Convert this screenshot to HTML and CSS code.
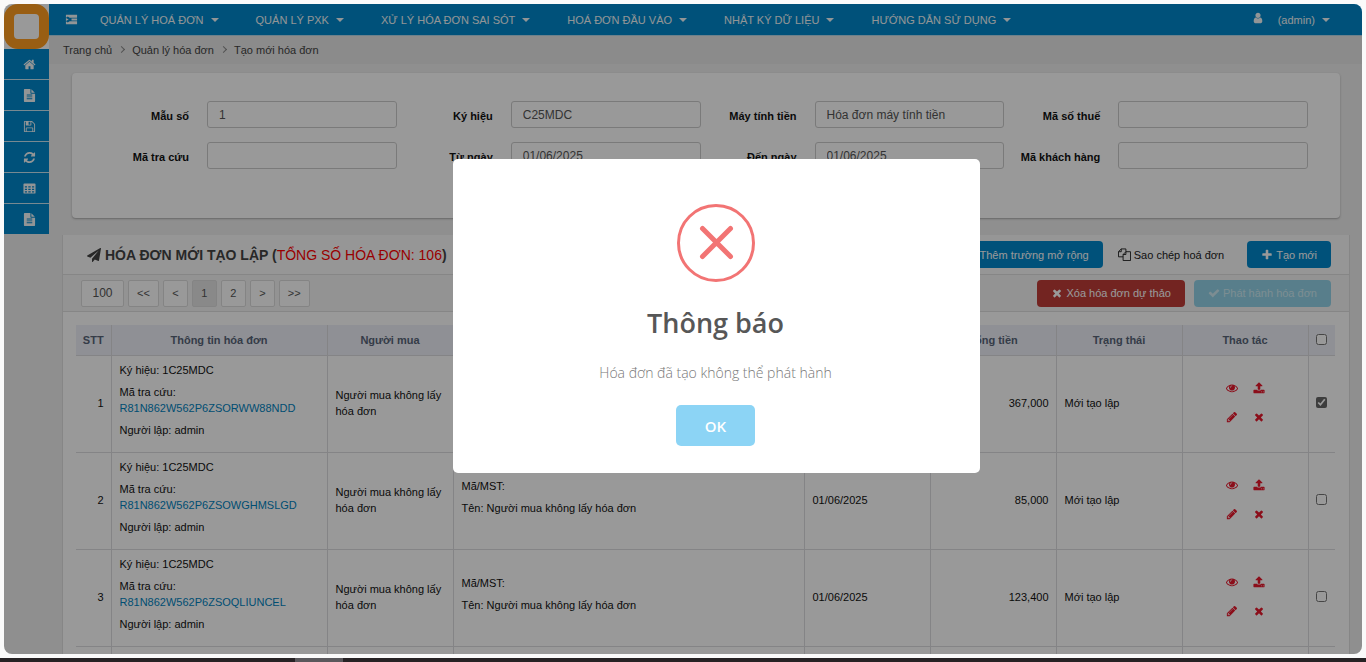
FILE: index.html
```
<!DOCTYPE html>
<html lang="vi">
<head>
    <meta charset="UTF-8">
    <meta name="viewport" content="width=device-width, initial-scale=1.0">
    <title>Tạo mới hóa đơn</title>
    <link rel="stylesheet" href="styles.css">
</head>
<body>
    <svg class="sprite" aria-hidden="true">
        <symbol id="home" viewBox="0 0 1792 1792"><path d="M1472 992v480q0 26-19 45t-45 19h-384v-384h-256v384h-384q-26 0-45-19t-19-45v-480q0-1 .5-3t.5-3l575-474 575 474q1 2 1 6zm223-69l-62 74q-8 9-21 11h-3q-13 0-21-7l-692-577-692 577q-12 8-24 7-13-2-21-11l-62-74q-8-10-7-23.5t11-21.5l719-599q32-26 76-26t76 26l244 204v-195q0-14 9-23t23-9h192q14 0 23 9t9 23v408l219 182q10 8 11 21.5t-7 23.5z"/></symbol>
        <symbol id="file" viewBox="0 0 1792 1792"><path d="M1596 476q14 14 28 36h-472v-472q22 14 36 28zm-476 164h544v1056q0 40-28 68t-68 28h-1344q-40 0-68-28t-28-68v-1600q0-40 28-68t68-28h800v544q0 40 28 68t68 28zm160 736v-64q0-14-9-23t-23-9h-704q-14 0-23 9t-9 23v64q0 14 9 23t23 9h704q14 0 23-9t9-23zm0-256v-64q0-14-9-23t-23-9h-704q-14 0-23 9t-9 23v64q0 14 9 23t23 9h704q14 0 23-9t9-23zm0-256v-64q0-14-9-23t-23-9h-704q-14 0-23 9t-9 23v64q0 14 9 23t23 9h704q14 0 23-9t9-23z"/></symbol>
        <symbol id="save" viewBox="0 0 1792 1792"><path d="M512 1536h768v-384h-768v384zm896 0h128v-896q0-14-10-38.5t-20-34.5l-281-281q-10-10-34-20t-39-10v416q0 40-28 68t-68 28h-576q-40 0-68-28t-28-68v-416h-128v1280h128v-416q0-40 28-68t68-28h832q40 0 68 28t28 68v416zm-384-928v-320q0-13-9.5-22.5t-22.5-9.5h-192q-13 0-22.5 9.5t-9.5 22.5v320q0 13 9.5 22.5t22.5 9.5h192q13 0 22.5-9.5t9.5-22.5zm640 32v928q0 40-28 68t-68 28h-1344q-40 0-68-28t-28-68v-1344q0-40 28-68t68-28h928q40 0 88 20t76 48l280 280q28 28 48 76t20 88z"/></symbol>
        <symbol id="refresh" viewBox="0 0 1792 1792"><path d="M1639 1056q0 5-1 7-64 268-268 434.5t-478 166.5q-146 0-282.5-55t-243.5-157l-129 129q-19 19-45 19t-45-19-19-45v-448q0-26 19-45t45-19h448q26 0 45 19t19 45-19 45l-137 137q71 66 161 102t187 36q134 0 250-65t186-179q11-17 53-117 8-23 30-23h192q13 0 22.5 9.5t9.5 22.5zm25-800v448q0 26-19 45t-45 19h-448q-26 0-45-19t-19-45 19-45l138-138q-148-137-349-137-134 0-250 65t-186 179q-11 17-53 117-8 23-30 23h-199q-13 0-22.5-9.5t-9.5-22.5v-7q65-268 270-434.5t480-166.5q146 0 284 55.5t245 156.5l130-129q19-19 45-19t45 19 19 45z"/></symbol>
        <symbol id="table" viewBox="0 0 14 14"><path fill-rule="evenodd" d="M1.500 1.500h11a1 1 0 0 1 1 1v9a1 1 0 0 1-1 1h-11a1 1 0 0 1-1-1v-9a1 1 0 0 1 1-1zM2 4.500v1.500h2.300v-1.500zm3.700 0v1.500h2.600v-1.500zm4 0v1.500h2.300v-1.500zM2 7.200v1.500h2.300v-1.500zm3.700 0v1.500h2.600v-1.500zm4 0v1.500h2.300v-1.500zM2 9.900v1.400h2.300v-1.400zm3.700 0v1.400h2.600v-1.400zm4 0v1.400h2.300v-1.400z"/></symbol>
        <symbol id="indent" viewBox="0 0 14 12"><path d="M1 1h12v3H5L3 2.700 1 4zM7 5h6v2H7zM1 8l2 1.300L5 8h8v3H1zM1 4.500l3 1.500-3 1.500z"/></symbol>
        <symbol id="user" viewBox="0 0 1792 1792"><path d="M1536 1399q0 109-62.5 187t-150.5 78h-854q-88 0-150.5-78t-62.500-187q0-85 8.500-160.500t31.500-152 58.500-131 94-89 134.500-34.500q131 128 313 128t313-128q76 0 134.500 34.500t94 89 58.500 131 31.500 152 8.500 160.500zm-256-887q0 159-112.500 271.500t-271.500 112.500-271.500-112.500-112.500-271.500 112.500-271.500 271.500-112.500 271.500 112.500 112.500 271.500z"/></symbol>
        <symbol id="plane" viewBox="0 0 1792 1792"><path d="M1764 11q33 24 27 64l-256 1536q-5 29-32 45-14 8-31 8-11 0-24-5l-453-185-242 295q-18 23-49 23-13 0-22-4-19-7-30.5-23.500t-11.500-36.500v-349l864-1059-1069 925-395-162q-37-14-40-55-2-40 32-59l1664-960q15-9 32-9 20 0 36 11z"/></symbol>
        <symbol id="times" viewBox="0 0 1792 1792"><path d="M1490 1322q0 40-28 68l-136 136q-28 28-68 28t-68-28l-294-294-294 294q-28 28-68 28t-68-28l-136-136q-28-28-28-68t28-68l294-294-294-294q-28-28-28-68t28-68l136-136q28-28 68-28t68 28l294 294 294-294q28-28 68-28t68 28l136 136q28 28 28 68t-28 68l-294 294 294 294q28 28 28 68z"/></symbol>
        <symbol id="check" viewBox="0 0 1792 1792"><path d="M1671 566q0 40-28 68l-724 724-136 136q-28 28-68 28t-68-28l-136-136-362-362q-28-28-28-68t28-68l136-136q28-28 68-28t68 28l294 295 656-657q28-28 68-28t68 28l136 136q28 28 28 68z"/></symbol>
        <symbol id="plus" viewBox="0 0 1792 1792"><path d="M1600 736v192q0 40-28 68t-68 28h-416v416q0 40-28 68t-68 28h-192q-40 0-68-28t-28-68v-416h-416q-40 0-68-28t-28-68v-192q0-40 28-68t68-28h416v-416q0-40 28-68t68-28h192q40 0 68 28t28 68v416h416q40 0 68 28t28 68z"/></symbol>
        <symbol id="eye" viewBox="0 0 1792 1792"><path d="M1664 960q-152-236-381-353 61 104 61 225 0 185-131.500 316.500t-316.500 131.500-316.500-131.500-131.500-316.500q0-121 61-225-229 117-381 353 133 205 333.500 326.500t434.500 121.500 434.500-121.500 333.500-326.500zm-720-384q0-20-14-34t-34-14q-125 0-214.500 89.500t-89.500 214.500q0 20 14 34t34 14 34-14 14-34q0-86 61-147t147-61q20 0 34-14t14-34zm848 384q0 34-20 69-140 230-376.500 368.500t-499.500 138.500-499.500-139-376.500-368q-20-35-20-69t20-69q140-229 376.500-368t499.500-139 499.500 139 376.500 368q20 35 20 69z"/></symbol>
        <symbol id="upload" viewBox="0 0 1792 1792"><path d="M1344 1472q0-26-19-45t-45-19-45 19-19 45 19 45 45 19 45-19 19-45zm256 0q0-26-19-45t-45-19-45 19-19 45 19 45 45 19 45-19 19-45zm128-224v320q0 40-28 68t-68 28h-1472q-40 0-68-28t-28-68v-320q0-40 28-68t68-28h427q21 56 70.500 92t110.500 36h256q61 0 110.500-36t70.500-92h427q40 0 68 28t28 68zm-325-648q-17 40-59 40h-256v448q0 26-19 45t-45 19h-256q-26 0-45-19t-19-45v-448h-256q-42 0-59-40-17-39 14-69l448-448q18-19 45-19t45 19l448 448q31 30 14 69z"/></symbol>
        <symbol id="pencil" viewBox="0 0 1792 1792"><path d="M491 1536l91-91-235-235-91 91v107h128v128h107zm523-928q0-22-22-22-10 0-17 7l-542 542q-7 7-7 17 0 22 22 22 10 0 17-7l542-542q7-7 7-17zm-54-192l416 416-832 832h-416v-416zm683 96q0 53-37 90l-166 166-416-416 166-165q36-38 90-38 53 0 91 38l235 234q37 39 37 91z"/></symbol>
        <symbol id="copy" viewBox="0 0 14 14"><path fill="none" stroke="currentColor" d="M5.500 9.500h-5v-5.500l3-3h5v3M3.500 1v3h-3M13.500 4v9.500h-8v-6.500l3-3zM8.500 4v3h-3"/></symbol>
    </svg>

    <div class="screen">
        <aside class="sidebar">
            <a class="logo" href="#" aria-label="Logo"><span></span></a>
            <a href="#" aria-label="Trang chủ"><svg><use href="#home"/></svg></a>
            <a href="#" aria-label="Hóa đơn"><svg><use href="#file"/></svg></a>
            <a href="#" aria-label="Lưu"><svg><use href="#save"/></svg></a>
            <a href="#" aria-label="Làm mới"><svg><use href="#refresh"/></svg></a>
            <a href="#" aria-label="Bảng"><svg><use href="#table"/></svg></a>
            <a href="#" aria-label="Báo cáo"><svg><use href="#file"/></svg></a>
        </aside>

        <div class="main">
            <nav class="navbar">
                <a href="#" class="toggle" aria-label="Menu"><svg><use href="#indent"/></svg></a>
                <a href="#" class="caret">QUẢN LÝ HOÁ ĐƠN</a>
                <a href="#" class="caret">QUẢN LÝ PXK</a>
                <a href="#" class="caret">XỬ LÝ HÓA ĐƠN SAI SÓT</a>
                <a href="#" class="caret">HOÁ ĐƠN ĐẦU VÀO</a>
                <a href="#" class="caret">NHẬT KÝ DỮ LIỆU</a>
                <a href="#" class="caret">HƯỚNG DẪN SỬ DỤNG</a>
                <a href="#" class="caret account"><svg><use href="#user"/></svg>(admin)</a>
            </nav>
            <div class="breadcrumb">
                <a href="#">Trang chủ</a>
                <a href="#">Quản lý hóa đơn</a>
                <a href="#">Tạo mới hóa đơn</a>
            </div>

            <form class="panel filter">
                <div class="field"><label for="mauSo">Mẫu số</label><input type="text" id="mauSo" value="1"></div>
                <div class="field"><label for="kyHieu">Ký hiệu</label><input type="text" id="kyHieu" value="C25MDC"></div>
                <div class="field"><label for="mayTinhTien">Máy tính tiền</label><input type="text" id="mayTinhTien" value="Hóa đơn máy tính tiền"></div>
                <div class="field"><label for="maSoThue">Mã số thuế</label><input type="text" id="maSoThue"></div>
                <div class="field"><label for="maTraCuu">Mã tra cứu</label><input type="text" id="maTraCuu"></div>
                <div class="field"><label for="tuNgay">Từ ngày</label><input type="text" id="tuNgay" value="01/06/2025"></div>
                <div class="field"><label for="denNgay">Đến ngày</label><input type="text" id="denNgay" value="01/06/2025"></div>
                <div class="field"><label for="maKhachHang">Mã khách hàng</label><input type="text" id="maKhachHang"></div>
            </form>

            <section class="panel list">
                <div class="list-head">
                    <h1><svg><use href="#plane"/></svg>HÓA ĐƠN MỚI TẠO LẬP (<span>TỔNG SỐ HÓA ĐƠN: 106</span>)</h1>
                    <button class="btn btn-primary">Thêm trường mở rộng</button>
                    <button class="btn btn-default"><svg><use href="#copy"/></svg>Sao chép hoá đơn</button>
                    <button class="btn btn-primary"><svg><use href="#plus"/></svg>Tạo mới</button>
                </div>
                <div class="toolbar">
                    <div class="pager">
                        <input type="text" value="100" aria-label="Số dòng">
                        <button>&lt;&lt;</button>
                        <button>&lt;</button>
                        <button class="active">1</button>
                        <button>2</button>
                        <button>&gt;</button>
                        <button>&gt;&gt;</button>
                    </div>
                    <button class="btn btn-danger"><svg><use href="#times"/></svg>Xóa hóa đơn dự thảo</button>
                    <button class="btn btn-info" disabled><svg><use href="#check"/></svg>Phát hành hóa đơn</button>
                </div>
                <table>
                    <colgroup>
                        <col class="c-no"><col class="c-info"><col class="c-mid"><col><col class="c-mid"><col class="c-mid"><col class="c-mid"><col class="c-mid"><col class="c-check">
                    </colgroup>
                    <thead>
                        <tr>
                            <th>STT</th>
                            <th>Thông tin hóa đơn</th>
                            <th>Người mua</th>
                            <th></th>
                            <th></th>
                            <th>Tổng tiền</th>
                            <th>Trạng thái</th>
                            <th>Thao tác</th>
                            <th><input type="checkbox" aria-label="Chọn tất cả"></th>
                        </tr>
                    </thead>
                    <tbody id="rows"></tbody>
                </table>
            </section>
        </div>

        <div class="overlay">
            <div class="alert" role="dialog" aria-labelledby="alertTitle">
                <svg class="error" viewBox="0 0 78 78"><circle cx="39" cy="39" r="37.500"/><path d="M25.500 24.500l28 28M53.500 24.500l-28 28"/></svg>
                <h2 id="alertTitle">Thông báo</h2>
                <p>Hóa đơn đã tạo không thể phát hành</p>
                <button>OK</button>
            </div>
        </div>
    </div>
    <div class="taskbar"><span></span></div>

    <script>
        const invoices = [
            { code: 'R81N862W562P6ZSORWW88NDD', total: '367,000', checked: true },
            { code: 'R81N862W562P6ZSOWGHMSLGD', total: '85,000' },
            { code: 'R81N862W562P6ZSOQLIUNCEL', total: '123,400' }
        ];
        const icon = (name, label) => `<button aria-label="${label}"><svg><use href="#${name}"/></svg></button>`;

        document.getElementById('rows').innerHTML = invoices.map((item, i) => `
            <tr>
                <td class="right">${i + 1}</td>
                <td><p>Ký hiệu: 1C25MDC</p><p>Mã tra cứu: <a href="#">${item.code}</a></p><p>Người lập: admin</p></td>
                <td>Người mua không lấy hóa đơn</td>
                <td><p>Mã/MST:</p><p>Tên: Người mua không lấy hóa đơn</p></td>
                <td>01/06/2025</td>
                <td class="right">${item.total}</td>
                <td>Mới tạo lập</td>
                <td><div class="actions">${icon('eye', 'Xem')}${icon('upload', 'Phát hành')}${icon('pencil', 'Sửa')}${icon('times', 'Xóa')}</div></td>
                <td class="center"><input type="checkbox" aria-label="Chọn" ${item.checked ? 'checked' : ''}></td>
            </tr>`).join('') + '<tr>' + '<td></td>'.repeat(9) + '</tr>';
    </script>
</body>
</html>
```
FILE: styles.css
```
* { box-sizing: border-box; }
body { font-family: "Liberation Sans", Arial, sans-serif; font-size: 11px; line-height: 16px; margin: 0; height: 100vh; display: flex; flex-direction: column; overflow: hidden; background: #fafafa; color: #111; }
a { color: inherit; text-decoration: none; }
p { margin: 0; }
svg { width: 13px; height: 13px; fill: currentColor; flex: none; }
button, input { font-family: inherit; margin: 0; }
button { cursor: pointer; }
.sprite { position: absolute; width: 0; height: 0; }

.screen { flex: 1; min-height: 0; margin: 4px; display: flex; position: relative; overflow: hidden; border-radius: 8px; background: #eee; }
.taskbar { height: 4px; background: #262224; flex: none; }
.taskbar span { display: block; width: 48px; height: 4px; margin-left: 295px; background: #5a585c; }

.sidebar { width: 45px; flex: none; }
.sidebar a { height: 31px; display: flex; align-items: center; justify-content: center; padding-left: 6px; background: #0088cc; color: #f4f8fa; border-bottom: 1px solid #c8e4f2; }
.sidebar a:last-child { height: 30px; border-bottom: 0; }
.sidebar .logo { height: 45px; padding: 0; background: #fff; border: 0; }
.logo span { width: 45px; height: 45px; border: 10px solid #ff9d20; border-radius: 14px; background: #ff9d20; display: flex; }
.logo span::before { content: ""; flex: 1; border-radius: 4px; background: #fff; }

.main { flex: 1; min-width: 0; }
.navbar { height: 32px; display: flex; align-items: center; background: #0088cc; color: #f4f8fa; border-bottom: 1px solid #b4d8ea; font-size: 11px; }
.navbar a { margin-right: 37px; display: flex; align-items: center; white-space: nowrap; }
.navbar .toggle { margin: 0 22px 0 16px; }
.caret::after { content: ""; margin-left: 7px; border: 4px solid transparent; border-top-color: currentColor; border-bottom: 0; }
.navbar .account { margin-left: auto; margin-right: 32px; }
.account svg { width: 12px; height: 12px; margin: 0 14px 3px 0; }
.breadcrumb { height: 28px; padding: 0 14px; display: flex; align-items: center; background: #e8e8e8; color: #444; }
.breadcrumb a + a::before { content: ""; display: inline-block; width: 4px; height: 4px; margin: 0 8px 2px 7px; border: solid #888; border-width: 1px 1px 0 0; transform: rotate(45deg); }

.panel { background: #fff; }
.filter { margin: 9px 22px 17px 23px; padding: 28px 32px 49px 21px; display: grid; grid-template-columns: repeat(4, 1fr); row-gap: 14px; border-radius: 4px; box-shadow: 0 1px 2px #aaa; }
.field { display: flex; align-items: center; gap: 18px; }
.field label { width: 96px; padding-top: 2px; text-align: right; font-weight: bold; white-space: nowrap; }
.field input { flex: 1; min-width: 0; height: 27px; padding: 0 11px; font-size: 12px; color: #555; background: #fff; border: 1px solid #ccc; border-radius: 3px; }

.list { margin: 0 12px 0 13px; border: 1px solid #e0e0e0; border-top: 0; }
.list-head, .toolbar { display: flex; align-items: center; padding: 0 18px; border-bottom: 1px solid #e0e0e0; }
.list-head { height: 40px; padding-left: 24px; background: #fafafa; }
.list-head h1 { flex: 1; margin: 0; display: flex; align-items: center; white-space: pre; font-size: 14px; color: #444; }
.list-head h1 svg { width: 14px; height: 14px; margin-right: 4px; }
.list-head h1 span { font-weight: normal; color: #f00; }
.toolbar { height: 37px; background: #f6f6f6; }
.btn { height: 27px; padding: 0 14px; display: flex; align-items: center; gap: 3px; font-size: 11px; border: 0; border-radius: 4px; }
.btn svg { width: 12px; height: 12px; }
.btn-primary { background: #0088cc; color: #fff; }
.btn-default { margin: 0 9px 0 1px; background: #fafafa; color: #222; }
.btn-default svg { width: 13px; height: 13px; }
.btn-danger { margin-right: 9px; background: #c03c38; color: #fff; }
.btn-info { background: #93d3e8; color: #d0ecf4; }
.pager { flex: 1; display: flex; gap: 4px; }
.pager input, .pager button { height: 27px; background: #fff; border: 1px solid #ddd; border-radius: 2px; color: #555; text-align: center; font-size: 12px; }
.pager input { width: 43px; }
.pager button { min-width: 25px; padding: 0 8px; font-size: 11px; }
.pager .active { background: #e4e4e4; }

table { width: calc(100% - 27px); margin: 13px 14px 0 13px; table-layout: fixed; border-collapse: collapse; }
.c-no { width: 35px; }
.c-info { width: 216px; }
.c-mid { width: 126px; }
.c-check { width: 27px; }
th { height: 30px; padding: 0; background: #eef1f8; color: #596579; }
th, td { border: 1px solid #dcdcdf; border-width: 0 1px 1px 0; }
th:last-child, td:last-child { border-right: 0; }
td { height: 97px; padding: 0 7px 2px 8px; }
td p + p { margin-top: 6px; }
td p:last-child { margin-bottom: 6px; }
td a { display: block; color: #0083bf; }
.right { text-align: right; }
.center, th { text-align: center; }
td.center { padding: 0 0 2px; }
table input { display: block; width: 11px; height: 11px; margin: 0 auto; accent-color: #666; }
.actions { width: 42px; margin: 0 auto; display: grid; grid-template-columns: 15px 15px; gap: 17px 12px; }
.actions button { padding: 0; border: 0; background: none; color: #e8182c; display: flex; justify-content: center; }
.actions svg { width: 12px; height: 12px; }

.overlay { position: absolute; inset: 0; display: flex; align-items: center; justify-content: center; padding: 0 0 26px 67px; background: rgba(0, 0, 0, 0.4); }
.alert { width: 527px; padding: 45px 21px 27px 19px; display: flex; flex-direction: column; align-items: center; background: #fff; border-radius: 5px; font-family: "Open Sans", sans-serif; }
.error { width: 78px; height: 78px; fill: none; stroke: #f27474; stroke-width: 3px; }
.error path { stroke-width: 5px; stroke-linecap: round; }
.alert h2 { margin: 22px 0 21px; font-size: 27px; line-height: 38px; font-weight: 600; color: #575757; }
.alert p { font-size: 14px; line-height: 20px; font-weight: 300; color: #797979; }
.alert button { width: 79px; height: 41px; margin-top: 22px; border: 0; border-radius: 5px; background: #8cd4f5; color: #fff; font-size: 15px; font-weight: 600; }
```
